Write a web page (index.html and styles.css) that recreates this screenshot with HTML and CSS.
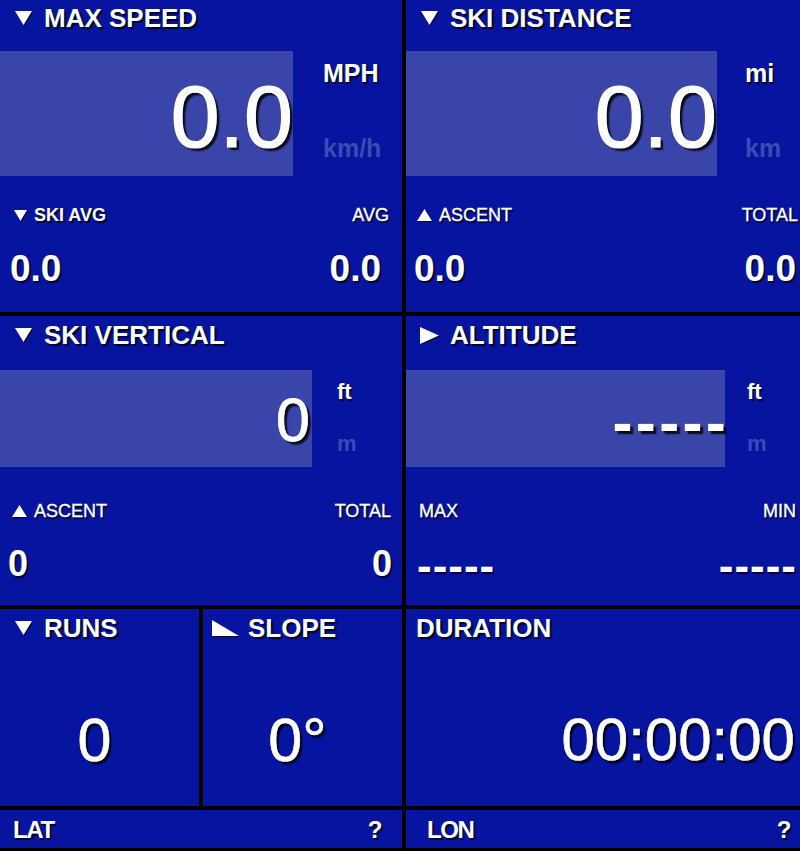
FILE: index.html
```html
<!DOCTYPE html>
<html>
<head>
<meta charset="utf-8">
<title>Ski Dashboard</title>
<link rel="stylesheet" href="styles.css">
</head>
<body>
<div class="dash">

  <section class="panel r1 speed">
    <div class="title">
      <svg class="ico" width="17" height="14" viewBox="0 0 17 14"><path d="M0 0H17L8.5 14Z"/></svg>
      <span>MAX SPEED</span>
    </div>
    <div class="readout">
      <div class="box"><span class="big">0.0</span></div>
      <div class="units"><span class="u-on">MPH</span><span class="u-off">km/h</span></div>
    </div>
    <div class="stats">
      <div class="lbl l strong"><svg class="ico" width="13" height="11" viewBox="0 0 13 11"><path d="M0 0H13L6.5 11Z"/></svg>SKI AVG</div>
      <div class="lbl r">AVG</div>
      <div class="val l">0.0</div>
      <div class="val r">0.0</div>
    </div>
  </section>

  <section class="panel r1 dist">
    <div class="title">
      <svg class="ico" width="17" height="14" viewBox="0 0 17 14"><path d="M0 0H17L8.5 14Z"/></svg>
      <span>SKI DISTANCE</span>
    </div>
    <div class="readout">
      <div class="box"><span class="big">0.0</span></div>
      <div class="units"><span class="u-on">mi</span><span class="u-off">km</span></div>
    </div>
    <div class="stats">
      <div class="lbl l"><svg class="ico" width="15" height="12" viewBox="0 0 15 12"><path d="M7.5 0L15 12H0Z"/></svg>ASCENT</div>
      <div class="lbl r">TOTAL</div>
      <div class="val l">0.0</div>
      <div class="val r">0.0</div>
    </div>
  </section>

  <section class="panel r2 vert">
    <div class="title">
      <svg class="ico" width="17" height="14" viewBox="0 0 17 14"><path d="M0 0H17L8.5 14Z"/></svg>
      <span>SKI VERTICAL</span>
    </div>
    <div class="readout">
      <div class="box"><span class="big">0</span></div>
      <div class="units"><span class="u-on">ft</span><span class="u-off">m</span></div>
    </div>
    <div class="stats">
      <div class="lbl l"><svg class="ico" width="15" height="12" viewBox="0 0 15 12"><path d="M7.5 0L15 12H0Z"/></svg>ASCENT</div>
      <div class="lbl r">TOTAL</div>
      <div class="val l">0</div>
      <div class="val r">0</div>
    </div>
  </section>

  <section class="panel r2 alt">
    <div class="title">
      <svg class="ico" width="19" height="17" viewBox="0 0 19 17"><path d="M0 0L19 8.5L0 17Z"/></svg>
      <span>ALTITUDE</span>
    </div>
    <div class="readout">
      <div class="box"><span class="big dashes">-----</span></div>
      <div class="units"><span class="u-on">ft</span><span class="u-off">m</span></div>
    </div>
    <div class="stats">
      <div class="lbl l">MAX</div>
      <div class="lbl r">MIN</div>
      <div class="val l sdash">-----</div>
      <div class="val r sdash">-----</div>
    </div>
  </section>

  <div class="pair">
    <section class="panel r3 runs">
      <div class="title">
        <svg class="ico" width="17" height="14" viewBox="0 0 17 14"><path d="M0 0H17L8.5 14Z"/></svg>
        <span>RUNS</span>
      </div>
      <div class="center-val">0</div>
    </section>
    <section class="panel r3 slope">
      <div class="title">
        <svg class="ico" width="27" height="16" viewBox="0 0 27 16"><path d="M0 0L27 16H0Z"/></svg>
        <span>SLOPE</span>
      </div>
      <div class="center-val">0°</div>
    </section>
  </div>

  <section class="panel r3 dur">
    <div class="title"><span>DURATION</span></div>
    <div class="time-val">00:00:00</div>
  </section>

  <section class="panel coord lat"><span>LAT</span><span>?</span></section>
  <section class="panel coord lon"><span>LON</span><span>?</span></section>

</div>
</body>
</html>
```

FILE: styles.css
```css
* { box-sizing: border-box; }

html, body {
  margin: 0;
  padding: 0;
  background: #000;
}

body {
  width: 800px;
  height: 851px;
  overflow: hidden;
  font-family: "Liberation Sans", Arial, Helvetica, sans-serif;
  color: #fff;
}

.dash {
  display: grid;
  grid-template-columns: 402px 394px;
  grid-template-rows: 312px 289px 197px 38px;
  gap: 4px;
  height: 851px;
  padding-bottom: 3px;
  background: #000;
}

.panel {
  background: #0614a0;
  overflow: hidden;
  display: flex;
  flex-direction: column;
}

.ico {
  fill: #fff;
  filter: drop-shadow(1.5px 1.5px 0.6px rgba(0, 0, 0, 0.75));
  flex: none;
}

.title {
  display: flex;
  align-items: center;
  gap: 12px;
  height: 36px;
  padding-left: 15px;
  font-size: 26px;
  font-weight: bold;
  text-shadow: 2px 2px 1px rgba(0, 0, 0, 0.75);
  white-space: nowrap;
}

.r2 .title,
.r3 .title { height: 38px; }

.alt .title { padding-left: 14px; gap: 11px; }
.slope .title { padding-left: 9px; gap: 9px; }
.dur .title { padding-left: 10px; }

/* readout: box + units */
.readout {
  display: flex;
  margin-top: 15px;
  height: 125px;
}

.r2 .readout {
  margin-top: 16px;
  height: 97px;
}

.box {
  background: #3a45a9;
  display: flex;
  align-items: center;
  justify-content: flex-end;
  flex: none;
  width: 293px;
}

.dist .box { width: 311px; }
.vert .box { width: 312px; }
.alt .box { width: 319px; }

.big {
  font-size: 88px;
  line-height: 1;
  margin-top: 6px;
  -webkit-text-stroke: 1.2px #fff;
  text-shadow: 3px 3px 1.5px rgba(0, 0, 0, 0.85);
}

.r2 .big {
  font-size: 61px;
  margin-top: 3px;
  padding-right: 2px;
  -webkit-text-stroke: 0.8px #fff;
}

.alt .big.dashes {
  font-size: 60px;
  font-weight: bold;
  letter-spacing: 3.3px;
  margin-top: 8px;
  margin-right: -4px;
  padding-right: 0;
  -webkit-text-stroke: 0;
}

.units {
  display: flex;
  flex-direction: column;
  justify-content: space-between;
  padding: 10px 0 15px 30px;
  font-size: 25px;
  font-weight: bold;
  line-height: 25px;
}

.dist .units { padding-left: 28px; }

.r2 .units {
  font-size: 22px;
  line-height: 22px;
  padding: 11px 0 12px 25px;
}

.alt .units { padding-left: 22px; }

.u-on { text-shadow: 1.5px 1.5px 1px rgba(0, 0, 0, 0.7); }
.u-off { color: #3a4cb4; }

/* stats */
.stats {
  display: grid;
  grid-template-columns: 1fr 1fr;
  grid-template-rows: 22px 40px;
  row-gap: 23px;
  margin-top: 28px;
  text-shadow: 1.5px 1.5px 1px rgba(0, 0, 0, 0.75);
  white-space: nowrap;
}

.r2 .stats {
  margin-top: 33px;
  row-gap: 22px;
}

.lbl {
  font-size: 18px;
  line-height: 22px;
  display: flex;
  align-items: center;
  gap: 7px;
  -webkit-text-stroke: 0.3px #fff;
}

.lbl.strong {
  font-weight: bold;
  -webkit-text-stroke: 0;
}

.lbl.r,
.val.r { justify-content: flex-end; text-align: right; }

.val {
  font-size: 37px;
  line-height: 40px;
  font-weight: bold;
}

.r2 .val { font-size: 36px; }

.speed .lbl.l { padding-left: 14px; }
.speed .lbl.r { padding-right: 13px; }
.speed .val.l { padding-left: 10px; }
.speed .val.r { padding-right: 21px; }

.dist .lbl.l { padding-left: 11px; }
.dist .lbl.r { padding-right: 2px; }
.dist .val.l { padding-left: 8px; }
.dist .val.r { padding-right: 4px; }

.vert .lbl.l { padding-left: 12px; }
.vert .lbl.r { padding-right: 11px; }
.vert .val.l { padding-left: 8px; }
.vert .val.r { padding-right: 10px; }

.alt .lbl.l { padding-left: 13px; }
.alt .lbl.r { padding-right: 4px; }

.alt .val.sdash {
  font-size: 44px;
  letter-spacing: 1px;
  line-height: 40px;
  margin-top: 2px;
}

.alt .val.l { padding-left: 11px; }
.alt .val.r { padding-right: 3px; }

/* row 3 */
.pair {
  display: grid;
  grid-template-columns: 199px 199px;
  gap: 4px;
  background: #000;
}

.center-val {
  text-align: center;
  font-size: 61px;
  line-height: 62px;
  margin-top: 62px;
  padding-right: 10px;
  -webkit-text-stroke: 0.6px #fff;
  text-shadow: 2.5px 2.5px 1px rgba(0, 0, 0, 0.8);
}

.time-val {
  text-align: right;
  font-size: 60px;
  line-height: 62px;
  margin-top: 62px;
  padding-right: 5px;
  -webkit-text-stroke: 0.6px #fff;
  text-shadow: 2.5px 2.5px 1px rgba(0, 0, 0, 0.8);
  white-space: nowrap;
}

/* coordinates */
.coord {
  flex-direction: row;
  justify-content: space-between;
  align-items: center;
  font-size: 24px;
  font-weight: bold;
  letter-spacing: -1.4px;
  text-shadow: 1.5px 1.5px 1px rgba(0, 0, 0, 0.75);
}

.lat { padding: 2px 21px 0 13px; }
.lon { padding: 2px 10px 0 21px; }
```
